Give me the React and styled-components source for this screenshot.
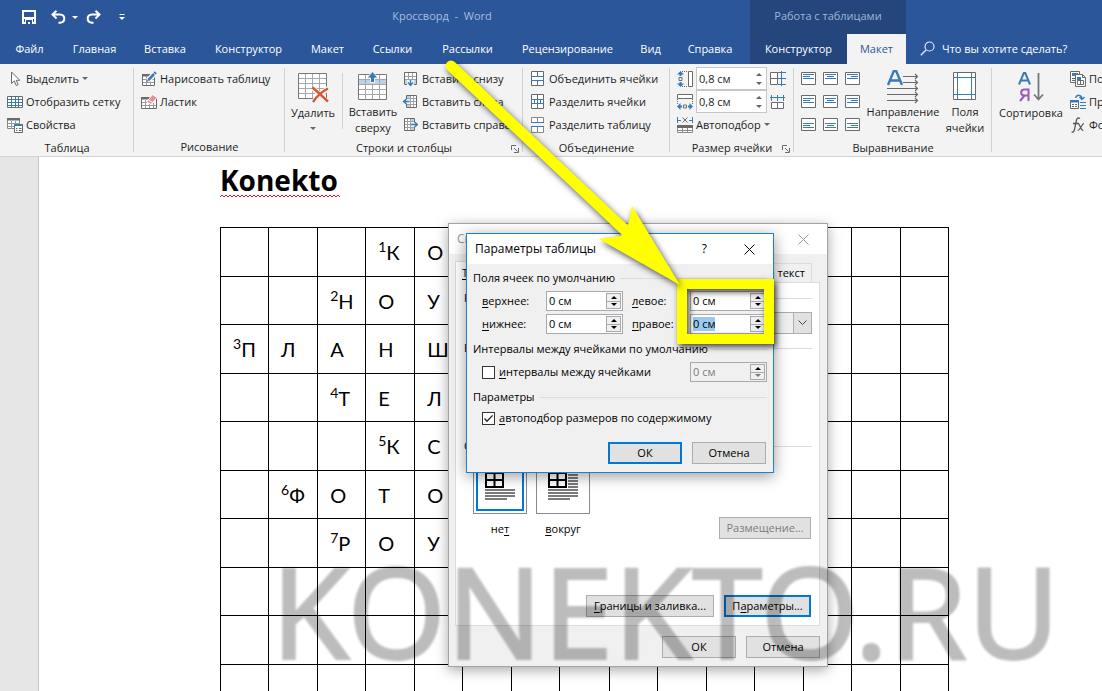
import React, { useEffect, useRef } from "react";
import styled, { createGlobalStyle, css } from "styled-components";

const GlobalStyle = createGlobalStyle`
  * {
    box-sizing: border-box;
  }
  body {
    margin: 0;
    background: #fff;
    font-family: "Open Sans", "Noto Sans", sans-serif;
    font-size: 11px;
    color: #1e1e1e;
  }
  button, input, select {
    font: inherit;
    color: inherit;
    margin: 0;
    padding: 0;
    border: 0;
    background: none;
    border-radius: 0;
    white-space: nowrap;
  }
  u {
    text-underline-offset: 2px;
  }
`;

/* ---------- window ---------- */

const Screen = styled.div`
  position: relative;
  height: 100vh;
  overflow: hidden;
  display: flex;
  flex-direction: column;
`;

const Header = styled.header`
  display: flex;
  flex-direction: column;
  flex: none;
  background: #2b579a;
  color: #fff;
`;

const TitleBar = styled.div`
  display: grid;
  grid-template-columns: 134px 616px 156px 1fr;
  height: 34px;
  align-items: center;
  line-height: 16px;
`;

const QuickAccess = styled.div`
  display: grid;
  grid-template-columns: 29px 21px 14px 33px 8px;
  align-items: center;
  padding-left: 22px;
`;

const QuickBtn = styled.button`
  display: flex;
`;

const DocTitle = styled.div`
  padding-bottom: 2px;
  color: #a9bddb;
  text-align: center;
  white-space: pre;
`;

const ContextTitle = styled.div`
  display: flex;
  align-items: center;
  justify-content: center;
  align-self: stretch;
  padding-bottom: 2px;
  background: #24467c;
  color: #9fb6d9;
`;

const TabBar = styled.nav`
  display: flex;
  height: 30px;
`;

const Tab = styled.button`
  flex: none;
  width: ${(p) => p.$w}px;
  padding-bottom: 2px;
  color: #fff;
  ${(p) =>
    p.$context &&
    css`
      background: #24467c;
    `}
  ${(p) =>
    p.$active &&
    css`
      background: #f3f3f3;
      color: #2b579a;
    `}
`;

const TabGap = styled.span`
  width: 4px;
`;

const TellMe = styled.button`
  display: flex;
  align-items: center;
  gap: 7px;
  padding: 0 0 2px 14px;
`;

/* ---------- ribbon ---------- */

const Ribbon = styled.div`
  display: flex;
  flex: none;
  height: 93px;
  background: #f3f3f3;
  border-bottom: 1px solid #d2d2d2;
  overflow: hidden;
`;

const Group = styled.section`
  position: relative;
  display: flex;
  flex-direction: column;
  flex: none;
  width: ${(p) => p.$w}px;
  padding-top: 3px;
  &:not(:last-child)::after {
    content: "";
    position: absolute;
    right: 0;
    top: 4px;
    bottom: 4px;
    width: 1px;
    background: #d2d2d2;
  }
`;

const GroupBody = styled.div`
  display: flex;
  height: 69px;
  padding-left: ${(p) => p.$pad || 7}px;
`;

const GroupLabel = styled.div`
  display: flex;
  justify-content: center;
  position: relative;
  padding-top: 3px;
  line-height: 18px;
`;

const Launcher = styled.button`
  position: absolute;
  right: 4px;
  top: 9px;
  display: flex;
`;

const Rows = styled.div`
  display: flex;
  flex-direction: column;
  margin-left: ${(p) => p.$ml || 0}px;
`;

const RowBtn = styled.button`
  display: flex;
  align-items: center;
  gap: ${(p) => p.$gap || 3}px;
  height: 23px;
  svg {
    flex: none;
  }
`;

const BigBtn = styled.button`
  display: flex;
  flex-direction: column;
  align-items: center;
  flex: none;
  width: ${(p) => p.$w}px;
  padding-top: 2px;
  line-height: 16px;
  svg {
    flex: none;
  }
`;

const BigIcon = styled.span`
  display: flex;
  align-items: center;
  justify-content: center;
  height: 36px;
`;

const CaretSlot = styled.span`
  display: flex;
  align-items: center;
  height: 14px;
`;

const InnerLine = styled.div`
  width: 1px;
  height: 56px;
  margin: 6px 5px 0;
  background: #d2d2d2;
`;

const SizeRow = styled.div`
  display: flex;
  align-items: center;
  gap: 3px;
  height: 23px;
`;

const RibbonSpin = styled.div`
  display: flex;
  align-items: center;
  width: 71px;
  height: 23px;
  padding: 0 4px 0 2px;
  border: 1px solid #c6c6c6;
  background: #fff;
  input {
    flex: 1;
    min-width: 0;
  }
`;

const RibbonArrows = styled.div`
  display: flex;
  flex-direction: column;
  gap: 6px;
  button {
    display: flex;
  }
`;

const AlignGrid = styled.div`
  display: grid;
  grid-template-columns: repeat(3, 16px);
  grid-auto-rows: 23px;
  column-gap: 6px;
  button {
    display: flex;
    align-items: center;
  }
`;

/* ---------- document ---------- */

const Workspace = styled.main`
  display: flex;
  flex: 1;
  min-height: 0;
  overflow: hidden;
`;

const Gutter = styled.div`
  flex: none;
  width: 39px;
  background: #e6e6e6;
  border-right: 1px solid #c6c6c6;
`;

const Page = styled.article`
  flex: 1;
  padding: 4px 0 0 181px;
  background: #fff;
  color: #000;
`;

const Heading = styled.h1`
  margin: 0;
  font-size: 28px;
  line-height: 38px;
  font-weight: 700;
`;

const Squiggle = styled.svg`
  display: block;
  margin-top: -5px;
`;

const Crossword = styled.table`
  width: 729px;
  margin-top: 29px;
  border-collapse: collapse;
  table-layout: fixed;
  font-family: Lato, Carlito, "Open Sans", sans-serif;
  td {
    width: 49px;
    border: 1px solid #000;
    padding: 0 0 0 12px;
    font-size: 20px;
    line-height: 24px;
    white-space: nowrap;
  }
  td:nth-child(odd) {
    width: 48px;
  }
  tr:nth-child(odd) {
    height: 49px;
  }
  tr:nth-child(even) {
    height: 48px;
  }
  sup {
    font-size: 14px;
    line-height: 0;
  }
`;

/* ---------- dialogs ---------- */

const Dialog = styled.div`
  position: absolute;
  display: flex;
  flex-direction: column;
  background: #f0f0f0;
  color: #000;
  line-height: 16px;
  ${(p) =>
    p.$front
      ? css`
          left: 466px;
          top: 233px;
          width: 308px;
          border: 1px solid #1d82d2;
          box-shadow: 0 3px 14px rgba(0, 0, 0, 0.4);
        `
      : css`
          left: 448px;
          top: 223px;
          width: 380px;
          border: 1px solid #a3a3a3;
          box-shadow: 0 3px 12px rgba(0, 0, 0, 0.35);
        `}
`;

const DialogTitle = styled.div`
  display: flex;
  align-items: center;
  height: 30px;
  padding: 0 18px 0 8px;
  background: #fff;
  font-size: 12px;
  color: ${(p) => (p.$muted ? "#999" : "#000")};
  button {
    display: flex;
    margin-left: 37px;
  }
  button:first-of-type {
    margin-left: auto;
  }
`;

const DialogBody = styled.div`
  display: flex;
  flex-direction: column;
  padding: ${(p) => (p.$front ? "6px 6px 8px" : "7px 7px 8px 6px")};
`;

const SectionTitle = styled.div`
  display: flex;
  align-items: center;
  gap: 5px;
  margin-bottom: ${(p) => p.$mb || 5}px;
  white-space: nowrap;
  &::after {
    content: "";
    flex: 1;
    height: 1px;
    background: #dcdcdc;
  }
`;

const FieldGrid = styled.div`
  display: grid;
  grid-template-columns: 64px 77px 67px 77px;
  row-gap: 3px;
  align-items: center;
  padding-left: 9px;
  margin-bottom: 7px;
  label:nth-of-type(even) {
    padding-left: 9px;
  }
`;

const Spin = styled.div`
  display: flex;
  width: 77px;
  height: 20px;
  padding: 1px;
  border: 1px solid #a9a9ad;
  background: ${(p) => (p.$off ? "#f0f0f0" : "#fff")};
  color: ${(p) => (p.$off ? "#7d7d7d" : "#000")};
  input {
    flex: 1;
    min-width: 0;
    padding-left: 1px;
    outline: none;
    line-height: 14px;
  }
  input::selection {
    background: #99c9ef;
    color: #000;
  }
`;

const SpinArrows = styled.div`
  display: flex;
  flex-direction: column;
  width: 15px;
  button {
    display: flex;
    flex: 1;
    align-items: center;
    justify-content: center;
    border: 1px solid #a9a9ad;
    background: #f0f0f0;
  }
  button + button {
    border-top: 0;
  }
`;

const CheckRow = styled.div`
  display: flex;
  align-items: center;
  padding-left: 9px;
  margin-bottom: ${(p) => p.$mb}px;
  input[type="checkbox"] {
    appearance: none;
    flex: none;
    width: 13px;
    height: 13px;
    margin-right: 4px;
    border: 1px solid #333;
    background: #fff;
  }
  input[type="checkbox"]:checked {
    background: #fff
      url("data:image/svg+xml,%3Csvg xmlns='http://www.w3.org/2000/svg' viewBox='0 0 11 11'%3E%3Cpath d='M1.5 5.5 4 8.2 9.6 2.4' fill='none' stroke='%23222' stroke-width='1.3'/%3E%3C/svg%3E");
  }
  ${Spin} {
    margin-left: auto;
  }
`;

const Buttons = styled.div`
  display: flex;
  justify-content: flex-end;
  gap: 10px;
  padding-right: ${(p) => p.$pr || 0}px;
  margin-top: ${(p) => p.$mt || "0"};
`;

const DlgBtn = styled.button`
  width: ${(p) => p.$w || 74}px;
  height: 22px;
  border: ${(p) => (p.$default ? "2px solid #0078d7" : "1px solid #adadad")};
  background: #e1e1e1;
  color: #000;
  &:disabled {
    color: #7d7d7d;
  }
`;

const DlgTabs = styled.div`
  display: flex;
  align-items: flex-end;
  height: 21px;
  width: 357px;
`;

const DlgTab = styled.button`
  position: relative;
  height: ${(p) => (p.$on ? 22 : 19)}px;
  flex: 1 1 auto;
  padding: 0 6px;
  border: 1px solid #dcdcdc;
  border-bottom: 0;
  margin-bottom: ${(p) => (p.$on ? -1 : 0)}px;
  background: ${(p) => (p.$on ? "#fff" : "#f0f0f0")};
  color: #000;
  text-align: ${(p) => (p.$on ? "left" : "right")};
`;

const TabPanel = styled.div`
  display: flex;
  flex-direction: column;
  height: 344px;
  padding: 7px 7px 8px 8px;
  border: 1px solid #dcdcdc;
  background: #fff;
  margin-bottom: 10px;
`;

const SelectWrap = styled.div`
  position: relative;
  align-self: flex-end;
  width: 120px;
  height: 22px;
  margin-bottom: 6px;
  select {
    appearance: none;
    width: 100%;
    height: 100%;
    padding-left: 4px;
    border: 1px solid #adadad;
    background: linear-gradient(90deg, #f0f0f0 100px, #adadad 100px, #adadad 101px, #e1e1e1 101px);
  }
  svg {
    position: absolute;
    right: 5px;
    top: 8px;
    pointer-events: none;
  }
`;

const Figures = styled.div`
  display: flex;
  align-items: flex-end;
  gap: 9px;
  padding-left: 9px;
  height: ${(p) => p.$h}px;
`;

const Figure = styled.button`
  display: flex;
  flex-direction: column;
  align-items: center;
  gap: 7px;
  width: 54px;
  color: #000;
  line-height: 16px;
  margin-bottom: 2px;
`;

const Frame = styled.span`
  display: flex;
  align-items: center;
  justify-content: center;
  width: 54px;
  height: 54px;
  border: 1px solid #858a95;
  background: #fff;
  box-shadow: ${(p) => (p.$on ? "inset 0 0 0 2px #fff, inset 0 0 0 4px #0078d7" : "none")};
`;

const PlaceBtn = styled(DlgBtn)`
  margin-left: auto;
  margin-right: 1px;
`;

/* ---------- annotation ---------- */

const Watermark = styled.div`
  position: absolute;
  left: 271px;
  top: 526px;
  font-family: "Noto Sans", "Open Sans", sans-serif;
  font-size: 127px;
  line-height: 168px;
  color: #000;
  -webkit-text-stroke: 2px #000;
  opacity: 0.26;
  filter: blur(1px);
  pointer-events: none;
`;

const Highlight = styled.div`
  position: absolute;
  left: 677px;
  top: 279px;
  width: 97px;
  height: 65px;
  border: 10px solid #ff0;
  box-shadow: 2px 3px 6px rgba(0, 0, 0, 0.7), inset 2px 3px 6px rgba(0, 0, 0, 0.7);
  pointer-events: none;
`;

const Arrow = styled.svg`
  position: absolute;
  left: 430px;
  top: 50px;
  pointer-events: none;
  filter: drop-shadow(2px 3px 3px rgba(0, 0, 0, 0.65));
`;

/* ---------- icons ---------- */

const G = "#6a6a6a";
const B = "#3b7ab8";

const Caret = ({ up, c = "#666", w = 6 }) => (
  <svg width={w} height="3" viewBox="0 0 6 3">
    <path d={up ? "M0 3 3 0l3 3z" : "M0 0h6L3 3z"} fill={c} />
  </svg>
);

const Svg = ({ w = 16, h = 16, children }) => (
  <svg width={w} height={h} viewBox={`0 0 ${w} ${h}`} fill="none" stroke={G}>
    {children}
  </svg>
);

const SaveIcon = () => (
  <Svg w={14} h={14}>
    <path d="M1 1h12v12H1z" stroke="#fff" strokeWidth="2" />
    <path d="M2 7h10v2H2z" fill="#fff" stroke="none" />
    <path d="M3 9h8v4H3z" fill="#fff" stroke="none" />
    <path d="M4 10h6v4H8v-2H6v2H4z" fill="#2b579a" stroke="none" />
  </Svg>
);

const UndoIcon = ({ flip }) => (
  <svg width="15" height="14" viewBox="0 0 15 14" fill="none" stroke="#fff" strokeWidth="2">
    <g transform={flip ? "matrix(-1 0 0 1 15 0)" : undefined}>
      <path d="M5.500.800 1.500 4.500l4 4M1.500 4.500H9c6 0 5.500 8 0 8.200H7.500" />
    </g>
  </svg>
);

const MoreIcon = () => (
  <Svg w={6} h={7}>
    <path d="M.5.500h5" stroke="#fff" />
    <path d="M0 3h6L3 6z" fill="#fff" stroke="none" />
  </Svg>
);

const SearchIcon = () => (
  <Svg w={15} h={15}>
    <circle cx="9.500" cy="5.500" r="4.500" stroke="#dfe6f1" strokeWidth="1.2" />
    <path d="M6 9 .8 14.200" stroke="#dfe6f1" strokeWidth="1.5" />
  </Svg>
);

const CursorIcon = () => (
  <Svg>
    <path d="M4.500 1v11.500l2.800-2.600 1.900 4.600 1.900-.8-1.900-4.400h3.600z" fill="#fff" />
  </Svg>
);

const GridIcon = () => (
  <Svg>
    <path d="M.5 2.500h15v11H.5z" fill="#fff" />
    <path d="M4.500 3v10M8.500 3v10M11.500 3v10M1 5.500h14M1 8.500h14M1 11.500h14" stroke={B} />
  </Svg>
);

const PropsIcon = () => (
  <Svg>
    <path d="M.5 1.500h12v10H.5z" fill="#fff" stroke="#8a8a8a" />
    <path d="M0 1h13v2.500H0z" fill={G} stroke="none" />
    <path d="M4.500 4v8M8.500 4v8M1 6.500h11M1 9.500h11" stroke="#9a9a9a" />
    <path d="M7.500 7.500h8v8h-8z" fill="#fff" stroke={G} />
    <path d="M7 7h9v2H7z" fill={B} stroke="none" />
    <path d="M9 11.500h1.500M12 11.500h2.500M9 13.500h1.500M12 13.500h2.500" />
  </Svg>
);

const DrawIcon = () => (
  <Svg>
    <path d="M1.500 3.500h12v11h-12z" fill="#fff" />
    <path d="M1 3h9v2.500H1z" fill={G} stroke="none" />
    <path d="M5.500 5v9M9.500 9v5M2 8.500h11M2 11.500h11" stroke="#9a9a9a" />
    <path d="M7 9.500 13.500 2.500" stroke="#fff" strokeWidth="5" />
    <path d="M7.500 9 13 3" stroke={B} strokeWidth="2.600" />
    <path d="m13.500 2.500 1.300-1.300" stroke={B} strokeWidth="3" />
    <path d="m5.500 11 1-2.500 1.500 1.500z" fill={B} stroke="none" />
  </Svg>
);

const EraserIcon = () => (
  <Svg>
    <path d="M.5 3.500h15v11H.5z" fill="#fff" />
    <path d="M0 3h8v2.500H0z" fill={G} stroke="none" />
    <path d="M4.500 6v8M8.500 10v4M12.500 9v5M1 8.500h5M1 11.500h14" stroke="#9a9a9a" />
    <path d="m5.500 8 6-7.500 4.500 3-6 7z" fill="#f28b93" stroke="#fff" />
    <path d="m7.300 5.800 4.500 3" stroke="#fff" />
  </Svg>
);

const DeleteIcon = () => (
  <Svg w={32} h={32}>
    <path d="M1.500 2.500h28v25h-28z" fill="#fff" stroke="#777" />
    <path d="M8.500 3v24M15.500 3v24M22.500 3v24M2 7.500h27M2 12.500h27M2 17.500h27M2 22.500h27" stroke="#a8a8a8" />
    <path d="m16 17 14 14M31 17 16 31" stroke="#f3f3f3" strokeWidth="5" />
    <path d="M15.500 16.500C20 20 26 26 31 30.500M31 17.500C26 20 20 25 16 31" stroke="#d65532" strokeWidth="2.400" />
  </Svg>
);

const InsertTopIcon = () => (
  <Svg w={32} h={32}>
    <path d="M1.500 3.500h28v25h-28z" fill="#fff" stroke="#777" />
    <path d="M2 8h27v5H2z" fill="#bcd0e6" stroke="none" />
    <path d="M8.500 4v24M15.500 13v15M22.500 4v24M2 8.500h27M2 13.500h27M2 18.500h27M2 23.500h27" stroke="#a8a8a8" />
    <path d="M15.500.500 10 7h3.500v4.500h4V7H21z" fill={B} stroke="#f3f3f3" />
  </Svg>
);

const InsertIcon = ({ dir }) => (
  <Svg w={15} h={16}>
    {dir === "down" && (
      <>
        <path d="M1.500 1.500h12v12h-12z" fill="#fff" />
        <path d="M2 9h11v4H2z" fill="#bcd0e6" stroke="none" />
        <path d="M5.500 2v11M9.500 2v7M2 5.500h11M2 8.500h11" stroke="#a0a0a0" />
        <path d="M4 9h7v6H4z" fill="#f3f3f3" stroke="none" />
        <path d="M7.500 9v5M5 11.500l2.500 3 2.500-3" stroke={B} strokeWidth="1.400" />
      </>
    )}
    {dir === "left" && (
      <>
        <path d="M3.500 1.500h10v12h-10z" fill="#fff" />
        <path d="M4 2h3v11H4z" fill="#bcd0e6" stroke="none" />
        <path d="M7.500 2v11M10.500 2v11M4 4.500h9M4 7.500h9M4 10.500h9" stroke="#a0a0a0" />
        <path d="M0 5h7v5H0z" fill="#f3f3f3" stroke="none" />
        <path d="M6.500 7.500H1M3.500 5l-3 2.500 3 2.500" stroke={B} strokeWidth="1.400" />
      </>
    )}
    {dir === "right" && (
      <>
        <path d="M1.500 1.500h10v12h-10z" fill="#fff" />
        <path d="M8 2h3v11H8z" fill="#bcd0e6" stroke="none" />
        <path d="M4.500 2v11M7.500 2v11M2 4.500h9M2 7.500h9M2 10.500h9" stroke="#a0a0a0" />
        <path d="M8 5h7v5H8z" fill="#f3f3f3" stroke="none" />
        <path d="M8 7.500h6M11.500 5l3 2.500-3 2.500" stroke={B} strokeWidth="1.400" />
      </>
    )}
  </Svg>
);

const MergeIcon = () => (
  <Svg w={14}>
    <path d="M.5.500h12v14H.5zM6.500 1v4M6.500 10v4" fill="#fff" />
    <path d="M.5 5.500h12v4H.5z" stroke={B} />
  </Svg>
);

const SplitIcon = () => (
  <Svg w={14}>
    <path d="M.5.500h12v14H.5zM6.500 1v4M6.500 10v4" fill="#fff" />
    <path d="M.5 5.500h12v4H.5zM3.500 6v3M6.500 6v3M9.500 6v3" stroke={B} />
  </Svg>
);

const SplitTableIcon = () => (
  <Svg w={14}>
    <path d="M.5 5V.5h12V5M6.500 1v4M.5 10v5.500h12V10M6.500 10v5" fill="#fff" stroke="#8a8a8a" />
    <path d="M0 5.500h13M0 9.500h13" stroke={B} />
  </Svg>
);

const HeightIcon = () => (
  <Svg>
    <path d="M11.500.5h4v15h-4z" fill="#fff" />
    <path d="M5 .5h6M5 15.500h6" strokeDasharray="1 1" />
    <path d="M2 6.500h3v3H2z" />
    <path d="M3.500 0 0 3.500h2.500V5h2V3.500H7zM3.500 16 0 12.500h2.500V11h2v1.500H7z" fill={B} stroke="none" />
  </Svg>
);

const WidthIcon = () => (
  <Svg>
    <path d="M.5.500h15v4H.5z" fill="#fff" />
    <path d="M.5 5v5M15.500 5v5" strokeDasharray="1 1" />
    <path d="M6.500 11h3v3h-3z" />
    <path d="M0 12.500 3.500 9v2.500H5v2H3.500V16zM16 12.500 12.500 9v2.500H11v2h1.500V16z" fill={B} stroke="none" />
  </Svg>
);

const AutofitIcon = () => (
  <Svg>
    <path d="M.5 0v6M15.500 0v6M1 3.500h3M12 3.500h3" stroke={B} />
    <path d="m5.500.500 5 5M10.500.500l-5 5" />
    <path d="M.5 8.500h15v7H.5z" fill="#fff" stroke="#8a8a8a" />
    <path d="M0 8h16v3H0z" fill={G} stroke="none" />
    <path d="M5.500 11v4M10.500 11v4M1 13.500h14" stroke="#8a8a8a" />
  </Svg>
);

const DistRowsIcon = () => (
  <Svg>
    <path d="M.5 1.500h7v12h-7zM1 7.500h6" fill="#fff" />
    <path d="M11.500 0v15M8 1.500h8M8 7.500h8M8 13.500h8" stroke={B} />
  </Svg>
);

const DistColsIcon = () => (
  <Svg>
    <path d="M1.500 8.500h12v6h-12zM7.500 8.500v6" fill="#fff" />
    <path d="M0 3.500h15M1.500 1v6M7.500 1v6M13.500 1v6" stroke={B} />
  </Svg>
);

const AlignIcon = ({ row, col }) => {
  const y = [3, 4, 6][row];
  const long = 11;
  const short = 7;
  const start = (len) => (col === 0 ? 2 : col === 1 ? 2 + (long - len) / 2 : 2 + long - len);
  return (
    <Svg w={15} h={13}>
      <path d="M.5.500h14v12H.5z" fill="#fff" />
      {[long, short, long].map((len, i) => (
        <path key={i} d={`M${start(len)} ${y - 0.5 + i * 2}h${len}`} stroke={B} />
      ))}
    </Svg>
  );
};

const DirectionIcon = () => (
  <Svg w={32} h={34}>
    <path d="M1 15 6.800 1h2.400L15 15M3.500 10.500h9" stroke={B} strokeWidth="2.400" />
    <path d="M16 6.500h14M16 12.500h14M0 18.500h30M0 24.500h30M0 30.500h30" strokeWidth="1.200" />
    {[6.5, 12.5, 18.5, 24.5, 30.5].map((y) => (
      <path key={y} d={`M28 ${y - 2.5}l2.500 2.500-2.500 2.500`} strokeWidth="1.200" />
    ))}
  </Svg>
);

const MarginsIcon = () => (
  <Svg w={24} h={30}>
    <path d="M.5.500h22v27H.5z" fill="#fff" />
    <path d="M4.500 1v26M18.500 1v26M1 5.500h21M1 22.500h21" stroke={B} />
  </Svg>
);

const SortIcon = () => (
  <Svg w={26} h={32}>
    <path d="M1 13.500 5.800 2h1.500L12 13.500M2.800 9.500h7.500" stroke={B} strokeWidth="2" />
    <path d="M10.500 30V18.500H6.500c-4.500 0-4.500 6 0 6h4M6.500 24.500 2 30" stroke="#9b59b6" strokeWidth="2" />
    <path d="M20.500 2v26M16 23.500l4.500 5 4.500-5" stroke="#777" strokeWidth="1.800" />
  </Svg>
);

const RepeatIcon = () => (
  <Svg>
    <path d="M.5.500h9v11h-9z" fill="#fff" />
    <path d="M2 2h6v3H2z" fill={B} stroke="none" />
    <path d="M2 7.500h3M2 9.500h3" />
    <path d="M5.500 3.500h7l3 3v9h-10z" fill="#fff" />
    <path d="M7 6h4v3H7z" fill={B} stroke="none" />
    <path d="M7.500 9.500h6v4h-6zM10.500 9v5M12.500 3.500v3h3" />
  </Svg>
);

const ConvertIcon = () => (
  <Svg>
    <path d="M.5 6.500h8v8h-8z" fill="#fff" />
    <path d="M0 6h9v2.500H0z" fill={B} stroke="none" />
    <path d="M2 10.500h2M5 10.500h2M2 12.500h2M5 12.500h2" />
    <path d="M10 8.500h6M10 11.500h6M10 14.500h6" stroke={B} />
    <path d="M5.500 4c1.500-4 6.500-3.500 6.500 1M9.500 3l2.500 2.500L14.500 3" stroke={B} strokeWidth="1.300" />
  </Svg>
);

const FormulaIcon = () => (
  <Svg>
    <path d="M1.500 15c2.500 1 3-2 3.500-5L6.500 3c.6-2 2-2.500 3.500-1.600M3 6.500h6" stroke="#555" strokeWidth="1.300" />
    <path d="M8 6.500c2 0 2.500 7.500 5.500 7M14 6.500c-2 0-4 7-6.500 7" stroke="#555" strokeWidth="1.200" />
  </Svg>
);

const LauncherIcon = () => (
  <Svg w={8} h={8}>
    <path d="M.5 5V.5H5M3 3l3.500 3.500M7.500 3v4.500H3" />
  </Svg>
);

const CloseIcon = ({ c = "#000" }) => (
  <Svg w={11} h={11}>
    <path d="m.5.500 10 10M10.500.500l-10 10" stroke={c} />
  </Svg>
);

const WrapIcon = ({ around }) => (
  <Svg w={30} h={30}>
    <path d="M1 1h17v14H1zM9.500 1v14M1 8h17" stroke="#000" strokeWidth="2" fill="#fff" />
    <path d="M0 18h30M0 21h30M0 24h30M0 27h22" stroke="#7a7a7a" strokeWidth="2" />
    {around && <path d="M20 3h10M20 6h10M20 9h10M20 12h10M20 15h10" stroke="#7a7a7a" strokeWidth="2" />}
  </Svg>
);

/* ---------- data ---------- */

const tabs = [
  ["Файл", 59],
  ["Главная", 71],
  ["Вставка", 70],
  ["Конструктор", 97],
  ["Макет", 61],
  ["Ссылки", 69],
  ["Рассылки", 81],
  ["Рецензирование", 119],
  ["Вид", 47],
  ["Справка", 72],
];

// number before a letter marks the start of the word
const crossword = [
  ["", "", "", "1К", "О"],
  ["", "", "2Н", "О", "У"],
  ["3П", "Л", "А", "Н", "Ш"],
  ["", "", "4Т", "Е", "Л"],
  ["", "", "", "5К", "С"],
  ["", "6Ф", "О", "Т", "О"],
  ["", "", "7Р", "О", "У"],
  [],
  [],
  [],
];

/* ---------- parts ---------- */

const RibbonSpinner = ({ label }) => (
  <RibbonSpin>
    <input defaultValue="0,8 см" aria-label={label} />
    <RibbonArrows>
      <button aria-label="Больше">
        <Caret up />
      </button>
      <button aria-label="Меньше">
        <Caret />
      </button>
    </RibbonArrows>
  </RibbonSpin>
);

const Spinner = ({ id, off, inputRef, label }) => (
  <Spin $off={off}>
    <input id={id} ref={inputRef} defaultValue="0 см" disabled={off} aria-label={label} />
    <SpinArrows>
      <button aria-label="Больше">
        <Caret up c="#000" />
      </button>
      <button aria-label="Меньше">
        <Caret c={off ? "#777" : "#000"} />
      </button>
    </SpinArrows>
  </Spin>
);

const Cell = ({ value = "" }) => {
  const m = value.match(/^(\d)(.)$/);
  if (!m) return <td>{value}</td>;
  return (
    <td>
      <sup>{m[1]}</sup>
      {m[2]}
    </td>
  );
};

const RibbonGroups = () => (
  <Ribbon>
    <Group $w={134}>
      <GroupBody>
        <Rows>
          <RowBtn>
            <CursorIcon />
            Выделить
            <Caret />
          </RowBtn>
          <RowBtn>
            <GridIcon />
            Отобразить сетку
          </RowBtn>
          <RowBtn>
            <PropsIcon />
            Свойства
          </RowBtn>
        </Rows>
      </GroupBody>
      <GroupLabel>Таблица</GroupLabel>
    </Group>

    <Group $w={151}>
      <GroupBody>
        <Rows>
          <RowBtn>
            <DrawIcon />
            Нарисовать таблицу
          </RowBtn>
          <RowBtn>
            <EraserIcon />
            Ластик
          </RowBtn>
        </Rows>
      </GroupBody>
      <GroupLabel>Рисование</GroupLabel>
    </Group>

    <Group $w={238}>
      <GroupBody $pad={4}>
        <BigBtn $w={48}>
          <BigIcon>
            <DeleteIcon />
          </BigIcon>
          Удалить
          <CaretSlot>
            <Caret />
          </CaretSlot>
        </BigBtn>
        <InnerLine />
        <BigBtn $w={50}>
          <BigIcon>
            <InsertTopIcon />
          </BigIcon>
          Вставить
          <br />
          сверху
        </BigBtn>
        <Rows $ml={5}>
          <RowBtn $gap={4}>
            <InsertIcon dir="down" />
            Вставить снизу
          </RowBtn>
          <RowBtn $gap={4}>
            <InsertIcon dir="left" />
            Вставить слева
          </RowBtn>
          <RowBtn $gap={4}>
            <InsertIcon dir="right" />
            Вставить справа
          </RowBtn>
        </Rows>
      </GroupBody>
      <GroupLabel>
        Строки и столбцы
        <Launcher aria-label="Параметры">
          <LauncherIcon />
        </Launcher>
      </GroupLabel>
    </Group>

    <Group $w={147}>
      <GroupBody $pad={8}>
        <Rows>
          <RowBtn $gap={4}>
            <MergeIcon />
            Объединить ячейки
          </RowBtn>
          <RowBtn $gap={4}>
            <SplitIcon />
            Разделить ячейки
          </RowBtn>
          <RowBtn $gap={4}>
            <SplitTableIcon />
            Разделить таблицу
          </RowBtn>
        </Rows>
      </GroupBody>
      <GroupLabel>Объединение</GroupLabel>
    </Group>

    <Group $w={124}>
      <GroupBody>
        <Rows>
          <SizeRow>
            <HeightIcon />
            <RibbonSpinner label="Высота" />
            <DistRowsIcon />
          </SizeRow>
          <SizeRow>
            <WidthIcon />
            <RibbonSpinner label="Ширина" />
            <DistColsIcon />
          </SizeRow>
          <RowBtn>
            <AutofitIcon />
            Автоподбор
            <Caret />
          </RowBtn>
        </Rows>
      </GroupBody>
      <GroupLabel>
        Размер ячейки
        <Launcher aria-label="Параметры">
          <LauncherIcon />
        </Launcher>
      </GroupLabel>
    </Group>

    <Group $w={198}>
      <GroupBody>
        <AlignGrid>
          {[0, 1, 2].map((row) =>
            [0, 1, 2].map((col) => (
              <button key={`${row}${col}`} aria-label="Выравнивание">
                <AlignIcon row={row} col={col} />
              </button>
            ))
          )}
        </AlignGrid>
        <BigBtn $w={84}>
          <BigIcon>
            <DirectionIcon />
          </BigIcon>
          Направление
          <br />
          текста
        </BigBtn>
        <BigBtn $w={40}>
          <BigIcon>
            <MarginsIcon />
          </BigIcon>
          Поля
          <br />
          ячейки
        </BigBtn>
      </GroupBody>
      <GroupLabel>Выравнивание</GroupLabel>
    </Group>

    <Group $w={290}>
      <GroupBody $pad={4}>
        <BigBtn $w={70}>
          <BigIcon>
            <SortIcon />
          </BigIcon>
          Сортировка
        </BigBtn>
        <Rows $ml={4}>
          <RowBtn>
            <RepeatIcon />
            Повторить строки заголовков
          </RowBtn>
          <RowBtn>
            <ConvertIcon />
            Преобразовать в текст
          </RowBtn>
          <RowBtn>
            <FormulaIcon />
            Формула
          </RowBtn>
        </Rows>
      </GroupBody>
    </Group>
  </Ribbon>
);

const PropertiesDialog = () => (
  <Dialog role="dialog" aria-label="Свойства таблицы">
    <DialogTitle $muted>
      Свойства таблицы
      <button aria-label="Закрыть">
        <CloseIcon c="#999" />
      </button>
    </DialogTitle>
    <DialogBody>
      <DlgTabs>
        <DlgTab $on>
          <u>Т</u>аблица
        </DlgTab>
        <DlgTab>Строка</DlgTab>
        <DlgTab>Столбец</DlgTab>
        <DlgTab>Ячейка</DlgTab>
        <DlgTab>Замещающий текст</DlgTab>
      </DlgTabs>
      <TabPanel>
        <SectionTitle $mb={6}>Размер</SectionTitle>
        <SelectWrap>
          <select aria-label="Единицы">
            <option>Сантиметры</option>
          </select>
          <svg width="9" height="6" viewBox="0 0 9 6" fill="none" stroke="#444">
            <path d="M.5.500l4 4 4-4" />
          </svg>
        </SelectWrap>
        <SectionTitle $mb={6}>Выравнивание</SectionTitle>
        <Figures $h={76} />
        <SectionTitle $mb={6}>Обтекание</SectionTitle>
        <Figures $h={79}>
          <Figure>
            <Frame $on>
              <WrapIcon />
            </Frame>
            <span>
              не<u>т</u>
            </span>
          </Figure>
          <Figure>
            <Frame>
              <WrapIcon around />
            </Frame>
            <span>
              <u>в</u>округ
            </span>
          </Figure>
          <PlaceBtn $w={92} disabled>
            Размещение...
          </PlaceBtn>
        </Figures>
        <Buttons $mt="auto" $pr={1}>
          <DlgBtn $w={128}>
            <u>Г</u>раницы и заливка...
          </DlgBtn>
          <DlgBtn $w={87} $default>
            П<u>а</u>раметры...
          </DlgBtn>
        </Buttons>
      </TabPanel>
      <Buttons>
        <DlgBtn>ОК</DlgBtn>
        <DlgBtn>Отмена</DlgBtn>
      </Buttons>
    </DialogBody>
  </Dialog>
);

const OptionsDialog = () => {
  const rightField = useRef(null);

  useEffect(() => {
    rightField.current.focus();
    rightField.current.select();
  }, []);

  return (
    <Dialog $front role="dialog" aria-label="Параметры таблицы">
      <DialogTitle>
        Параметры таблицы
        <button aria-label="Справка">?</button>
        <button aria-label="Закрыть">
          <CloseIcon />
        </button>
      </DialogTitle>
      <DialogBody $front>
        <SectionTitle>Поля ячеек по умолчанию</SectionTitle>
        <FieldGrid>
          <label htmlFor="top">
            <u>в</u>ерхнее:
          </label>
          <Spinner id="top" />
          <label htmlFor="left">
            <u>л</u>евое:
          </label>
          <Spinner id="left" />
          <label htmlFor="bottom">
            <u>н</u>ижнее:
          </label>
          <Spinner id="bottom" />
          <label htmlFor="right">
            <u>п</u>равое:
          </label>
          <Spinner id="right" inputRef={rightField} />
        </FieldGrid>
        <SectionTitle>Интервалы между ячейками по умолчанию</SectionTitle>
        <CheckRow $mb={7}>
          <input type="checkbox" id="spacing" />
          <label htmlFor="spacing">
            <u>и</u>нтервалы между ячейками
          </label>
          <Spinner off label="Интервал" />
        </CheckRow>
        <SectionTitle>Параметры</SectionTitle>
        <CheckRow $mb={16}>
          <input type="checkbox" id="autofit" defaultChecked />
          <label htmlFor="autofit">
            <u>а</u>втоподбор размеров по содержимому
          </label>
        </CheckRow>
        <Buttons $pr={1}>
          <DlgBtn $default>ОК</DlgBtn>
          <DlgBtn>Отмена</DlgBtn>
        </Buttons>
      </DialogBody>
    </Dialog>
  );
};

const App = () => {
  return (
    <>
      <GlobalStyle />
      <Screen>
        <Header>
          <TitleBar>
            <QuickAccess>
              <QuickBtn aria-label="Сохранить">
                <SaveIcon />
              </QuickBtn>
              <QuickBtn aria-label="Отменить">
                <UndoIcon />
              </QuickBtn>
              <Caret c="#fff" />
              <QuickBtn aria-label="Повторить">
                <UndoIcon flip />
              </QuickBtn>
              <QuickBtn aria-label="Настройка панели">
                <MoreIcon />
              </QuickBtn>
            </QuickAccess>
            <DocTitle>{"Кроссворд  -  Word"}</DocTitle>
            <ContextTitle>Работа с таблицами</ContextTitle>
          </TitleBar>
          <TabBar>
            {tabs.map(([name, w]) => (
              <Tab key={name} $w={w}>
                {name}
              </Tab>
            ))}
            <TabGap />
            <Tab $w={97} $context>
              Конструктор
            </Tab>
            <Tab $w={59} $active>
              Макет
            </Tab>
            <TellMe>
              <SearchIcon />
              Что вы хотите сделать?
            </TellMe>
          </TabBar>
        </Header>

        <RibbonGroups />

        <Workspace>
          <Gutter />
          <Page>
            <Heading>
              Konekto
              <Squiggle width="120" height="4" viewBox="0 0 120 4" fill="none" stroke="#e81123">
                <path d={"M0 3" + "l2-2 2 2".repeat(30)} />
              </Squiggle>
            </Heading>
            <Crossword>
              <tbody>
                {crossword.map((row, i) => (
                  <tr key={i}>
                    {Array.from({ length: 15 }, (_, j) => (
                      <Cell key={j} value={row[j]} />
                    ))}
                  </tr>
                ))}
              </tbody>
            </Crossword>
          </Page>
        </Workspace>

        <PropertiesDialog />
        <OptionsDialog />

        <Watermark>KONEKTO.RU</Watermark>
        <Highlight />
        <Arrow width="270" height="250" viewBox="430 50 270 250">
          <path d="M451 66 628 233" stroke="#ff0" strokeWidth="11" strokeLinecap="round" />
          <path d="M680 285 632 206l-4 19-7 11-22 3z" fill="#ff0" />
        </Arrow>
      </Screen>
    </>
  );
};

export default App;
